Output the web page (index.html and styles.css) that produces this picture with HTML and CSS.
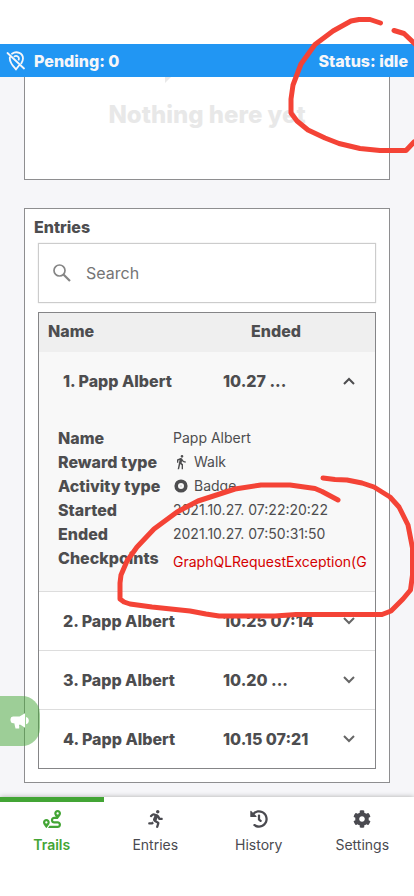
FILE: index.html
```html
<!DOCTYPE html>
<html lang="en">
<head>
<meta charset="utf-8">
<meta name="viewport" content="width=device-width, initial-scale=1">
<title>Trails</title>
<link rel="stylesheet" href="styles.css">
</head>
<body>
<div class="app">
  <header class="top">
    <div class="sync">
      <svg class="sync-icon" viewBox="0 0 20 20" width="20" height="20" fill="none" stroke="currentColor" stroke-width="1.8" stroke-linecap="round" aria-hidden="true">
        <path d="M1.5 2 18 17.5M6 2.7C10.700-.5 17 2.200 17 7.500c0 1.600-.7 3.200-1.600 4.700M3.800 6.500c-.5 5 3.500 8.700 6.200 11.800l3-3.800M8.500 5.400c2-1.500 5.200.5 4.200 3.200"/>
      </svg>
      <span>Pending: 0</span>
      <span class="sync-status">Status: idle</span>
    </div>
  </header>

  <main class="content">
    <section class="card empty">
      <svg class="empty-mark" viewBox="0 0 6 6" width="6" height="6" aria-hidden="true"><path d="M0 0h6L0 6z" fill="currentColor"/></svg>
      <p class="empty-text">Nothing here yet</p>
    </section>

    <section class="card entries">
      <h2 class="title">Entries</h2>
      <label class="search">
        <svg viewBox="0 0 18 18" width="18" height="18" fill="none" stroke="currentColor" stroke-width="1.700" aria-hidden="true"><circle cx="6.500" cy="6.500" r="5.500"/><path d="m10.500 10.500 6.500 6.500" stroke-width="2.200"/></svg>
        <input type="search" placeholder="Search" aria-label="Search">
      </label>

      <table class="table">
        <colgroup><col class="col-name"><col class="col-date"><col class="col-toggle"></colgroup>
        <thead>
          <tr><th scope="col">Name</th><th scope="col" class="head-date" colspan="2">Ended</th></tr>
        </thead>
        <tbody>
          <tr class="row open">
            <td class="name">1. Papp Albert</td><td>10.27 ...</td>
            <td><button class="toggle" aria-label="Collapse" aria-expanded="true"><svg viewBox="0 0 12 8" width="12" height="8" aria-hidden="true"><path d="m1 7 5-5 5 5"/></svg></button></td>
          </tr>
          <tr class="detail open">
            <td colspan="3">
              <dl class="facts">
                <dt>Name</dt><dd>Papp Albert</dd>
                <dt>Reward type</dt>
                <dd><svg class="fact-icon" viewBox="0 0 24 24" width="16" height="16" fill="currentColor" aria-hidden="true"><path d="M13.500 5.500c1.100 0 2-.9 2-2s-.9-2-2-2-2 .9-2 2 .9 2 2 2zM9.800 8.900 7 23h2.100l1.800-8 2.100 2v6h2v-7.500l-2.100-2 .6-3C14.800 12 16.800 13 19 13v-2c-1.900 0-3.500-1-4.300-2.400l-1-1.600c-.4-.6-1-1-1.700-1-.3 0-.5.1-.8.1L6 8.300V13h2V9.600l1.800-.7"/></svg>Walk</dd>
                <dt>Activity type</dt>
                <dd><svg class="fact-icon" viewBox="0 0 16 16" width="16" height="16" aria-hidden="true"><circle cx="8" cy="8" r="4.800" fill="none" stroke="currentColor" stroke-width="3.600"/><circle cx="8" cy="8" r=".7" fill="currentColor" opacity=".4"/></svg>Badge</dd>
                <dt>Started</dt><dd>2021.10.27. 07:22:20:22</dd>
                <dt>Ended</dt><dd>2021.10.27. 07:50:31:50</dd>
                <dt>Checkpoints</dt><dd class="error">GraphQLRequestException(G</dd>
              </dl>
            </td>
          </tr>
          <tr class="row">
            <td class="name">2. Papp Albert</td><td>10.25 07:14</td>
            <td><button class="toggle" aria-label="Expand" aria-expanded="false"><svg viewBox="0 0 12 8" width="12" height="8" aria-hidden="true"><path d="m1 1 5 5 5-5"/></svg></button></td>
          </tr>
          <tr class="row">
            <td class="name">3. Papp Albert</td><td>10.20 ...</td>
            <td><button class="toggle" aria-label="Expand" aria-expanded="false"><svg viewBox="0 0 12 8" width="12" height="8" aria-hidden="true"><path d="m1 1 5 5 5-5"/></svg></button></td>
          </tr>
          <tr class="row">
            <td class="name">4. Papp Albert</td><td>10.15 07:21</td>
            <td><button class="toggle" aria-label="Expand" aria-expanded="false"><svg viewBox="0 0 12 8" width="12" height="8" aria-hidden="true"><path d="m1 1 5 5 5-5"/></svg></button></td>
          </tr>
        </tbody>
      </table>
    </section>
  </main>

  <nav class="tabs">
    <a class="tab active" href="#trails">
      <svg viewBox="0 0 512 512" width="18" height="18" fill="currentColor" aria-hidden="true"><path d="M416 320h-96c-17.600 0-32-14.400-32-32s14.400-32 32-32h96s96-107 96-160-43-96-96-96-96 43-96 96c0 25.500 22.200 63.400 45.300 96H320c-52.900 0-96 43.100-96 96s43.100 96 96 96h96c17.600 0 32 14.400 32 32s-14.400 32-32 32H185.500c-16 24.800-33.800 47.700-47.300 64H416c52.900 0 96-43.100 96-96s-43.100-96-96-96zm0-256c17.700 0 32 14.300 32 32s-14.300 32-32 32-32-14.300-32-32 14.300-32 32-32zM96 256c-53 0-96 43-96 96s96 160 96 160 96-107 96-160-43-96-96-96zm0 128c-17.700 0-32-14.300-32-32s14.300-32 32-32 32 14.300 32 32-14.300 32-32 32z"/></svg>
      <span>Trails</span>
    </a>
    <a class="tab" href="#entries">
      <svg viewBox="0 0 416 512" width="15" height="18" fill="currentColor" aria-hidden="true"><path d="M272 96c26.510 0 48-21.490 48-48S298.510 0 272 0s-48 21.490-48 48 21.490 48 48 48zM113.690 317.470l-14.800 34.520H32c-17.670 0-32 14.330-32 32s14.330 32 32 32h77.450c19.250 0 36.580-11.440 44.110-29.090l8.790-20.520-10.670-6.300c-17.320-10.230-30.060-25.370-37.990-42.610zM384 223.990h-44.030l-26.060-53.250c-12.500-25.550-35.450-44.230-61.780-50.940l-71.080-21.140c-28.300-6.800-57.770-.55-80.840 17.140l-39.670 30.410c-14.030 10.750-16.690 30.830-5.920 44.860s30.840 16.660 44.860 5.920l39.690-30.410c7.670-5.890 17.440-8 25.270-6.140l14.700 4.370-37.460 87.390c-12.620 29.480-1.310 64.010 26.300 80.310l84.980 50.170-27.470 87.730c-5.280 16.860 4.110 34.810 20.970 40.090 3.190 1 6.410 1.480 9.580 1.480 13.610 0 26.230-8.770 30.520-22.450l31.640-101.060c5.910-20.770-2.890-43.080-21.640-54.390l-61.240-36.140 31.310-78.280 20.270 41.430c8 16.340 24.920 26.890 43.110 26.890H384c17.670 0 32-14.330 32-32s-14.330-31.990-32-31.990z"/></svg>
      <span>Entries</span>
    </a>
    <a class="tab" href="#history">
      <svg viewBox="0 0 512 512" width="18" height="18" fill="currentColor" aria-hidden="true"><path d="M504 255.531c.253 136.640-111.180 248.372-247.820 248.468-59.015.042-113.223-20.530-155.822-54.911-11.077-8.940-11.905-25.541-1.839-35.607l11.267-11.267c8.609-8.609 22.353-9.551 31.891-1.984C173.062 425.135 212.781 440 256 440c101.705 0 184-82.311 184-184 0-101.705-82.311-184-184-184-48.814 0-93.149 18.969-126.068 49.932l50.754 50.754c10.080 10.080 2.941 27.314-11.313 27.314H24c-8.837 0-16-7.163-16-16V38.627c0-14.254 17.234-21.393 27.314-11.314l49.372 49.372C129.209 34.136 189.552 8 256 8c136.810 0 247.747 110.780 248 247.531zm-180.912 78.784l9.823-12.630c8.138-10.463 6.253-25.542-4.210-33.679L288 256.349V152c0-13.255-10.745-24-24-24h-16c-13.255 0-24 10.745-24 24v135.651l65.409 50.874c10.463 8.137 25.541 6.253 33.679-4.210z"/></svg>
      <span>History</span>
    </a>
    <a class="tab" href="#settings">
      <svg viewBox="0 0 512 512" width="18" height="18" fill="currentColor" aria-hidden="true"><path d="M487.400 315.700l-42.600-24.600c4.300-23.200 4.300-47 0-70.200l42.600-24.600c4.900-2.800 7.100-8.600 5.500-14-11.100-35.600-30-67.800-54.700-94.600-3.800-4.100-10-5.100-14.800-2.300L380.800 110c-17.900-15.400-38.500-27.300-60.800-35.100V25.800c0-5.600-3.900-10.500-9.400-11.700-36.700-8.200-74.300-7.800-109.200 0-5.500 1.200-9.400 6.100-9.400 11.700V75c-22.200 7.900-42.800 19.800-60.800 35.100L88.700 85.500c-4.900-2.800-11-1.900-14.800 2.300-24.700 26.700-43.600 58.900-54.700 94.600-1.700 5.400.6 11.200 5.500 14L67.300 221c-4.300 23.200-4.300 47 0 70.200l-42.600 24.600c-4.900 2.800-7.100 8.600-5.500 14 11.100 35.600 30 67.800 54.700 94.600 3.800 4.100 10 5.100 14.800 2.300l42.600-24.600c17.900 15.400 38.500 27.300 60.800 35.100v49.200c0 5.600 3.900 10.500 9.400 11.700 36.700 8.200 74.300 7.800 109.200 0 5.500-1.200 9.400-6.100 9.400-11.700v-49.200c22.200-7.900 42.800-19.800 60.800-35.100l42.600 24.600c4.900 2.800 11 1.900 14.800-2.300 24.700-26.700 43.600-58.900 54.700-94.600 1.500-5.500-.7-11.300-5.600-14.100zM256 336c-44.100 0-80-35.900-80-80s35.900-80 80-80 80 35.900 80 80-35.900 80-80 80z"/></svg>
      <span>Settings</span>
    </a>
  </nav>

  <button class="feedback" aria-label="Announcements">
    <svg viewBox="0 0 20 16" width="20" height="16" fill="currentColor" aria-hidden="true"><path d="M3 3.500h6.500L15 .3v14.500l-4.500-3H9v1.200h.2V15.500H5.500l-1.200-5.300H3a2.800 2.800 0 0 1-2.500-2.800V6.100A2.600 2.600 0 0 1 3 3.500zM16 4c3.800.8 3.800 6.500 0 7.300z"/></svg>
  </button>

  <svg class="marks" viewBox="0 0 414 896" width="414" height="896" aria-hidden="true">
    <path d="M380.500 23 370 19.500H359L351 21 333 31 315 44.500 301 64 293 85 291 99V113L297 121 308 130 325 138 339 143.500 360 148.500 380 150.500H406L414 142"/>
    <path d="M394 30.500 404 33.500 416 45"/>
    <path d="M338 500 322 491.500 315 488.500 290 485H261L235 489 198 501 177 512 154 529 137 547 127 561 121 575 120 583V599L124 602 130 604 152 607 190 611 206 614 219 616H275L296 614.500H382L391 611 403 599 410.500 590 412.500 575V548L408 525 399 507 390 497 374 487 362 483 347 480 335 479.500 323 478"/>
  </svg>
</div>
</body>
</html>
```
FILE: styles.css
```css
* {
  box-sizing: border-box;
}

body {
  margin: 0;
  background: #f6f6f9;
  color: #4d4d4f;
  font-family: Inter, "Open Sans", sans-serif;
  font-size: 16px;
  line-height: 24px;
}

.app {
  position: relative;
  display: flex;
  flex-direction: column;
  min-height: 100vh;
  overflow: hidden;
}

.top {
  padding-top: 44px;
  background: #fff;
}

.sync {
  display: flex;
  align-items: center;
  gap: 8px;
  height: 33px;
  padding: 0 6px;
  background: #2196f3;
  color: #f6f6f9;
  font-weight: 800;
}

.sync-status {
  margin-left: auto;
}

.content {
  flex: 1;
  display: flex;
  flex-direction: column;
  gap: 28px;
  padding: 0 24px 14px;
}

.card {
  border: 1px solid #8e8e90;
  background: #fff;
}

.empty {
  display: flex;
  flex-direction: column;
  height: 103px;
  border-top: 0;
  color: #e8e8e8;
}

.empty-mark {
  margin-left: 140px;
}

.empty-text {
  margin: 16px 0 0;
  font-size: 24px;
  font-weight: 800;
  line-height: 32px;
  text-align: center;
}

.entries {
  padding: 6px 13px 13px;
}

.title {
  margin: 0 -4px 4px;
  font-size: 16px;
  font-weight: 800;
  line-height: 24px;
}

.search {
  display: flex;
  align-items: center;
  gap: 15px;
  height: 60px;
  margin-bottom: 9px;
  padding: 0 14px;
  border: 1px solid #ccc;
  box-shadow: 0 0 1px #ccc;
  color: #858585;
}

.search input {
  flex: 1;
  min-width: 0;
  padding: 0;
  border: 0;
  outline: 0;
  background: none;
  color: #4d4d4f;
  font: inherit;
}

.search input::placeholder {
  color: #757575;
  opacity: 1;
}

.table {
  width: 100%;
  border: 1px solid #858587;
  border-spacing: 0;
  table-layout: fixed;
  font-weight: 800;
}

.col-toggle {
  width: 55px;
}

.col-date {
  width: 97px;
}

.table th,
.table td {
  padding: 0;
  text-align: left;
  white-space: nowrap;
}

.table th {
  height: 39px;
  padding: 0 0 3px 9px;
  background: #efefef;
  font-weight: 800;
}

.table .head-date {
  padding-left: 28px;
}

.row td {
  height: 59px;
  border-bottom: 1px solid #ddd;
}

.row:last-child td {
  height: 58px;
  border-bottom: 0;
}

.row .name {
  padding-left: 24px;
}

.open td {
  background: #f8f8f8;
}

.row.open td {
  height: 58px;
  border-bottom: 0;
}

.toggle {
  display: flex;
  align-items: center;
  justify-content: center;
  width: 57px;
  height: 40px;
  padding: 0;
  border: 0;
  background: none;
  color: #666;
}

.open .toggle {
  color: #4d4d4f;
}

.toggle path {
  fill: none;
  stroke: currentColor;
  stroke-width: 2;
}

.detail td {
  border-bottom: 1px solid #ddd;
}

.facts {
  display: grid;
  grid-template-columns: 115px 1fr;
  grid-auto-rows: 24px;
  margin: 0;
  padding: 16px 0 21px 19px;
  overflow: hidden;
}

.facts dd {
  display: flex;
  align-items: center;
  gap: 5px;
  min-width: 0;
  margin: 0;
  overflow: hidden;
  font-size: 14px;
  font-weight: 400;
}

.facts .error {
  height: 28px;
  padding-top: 4px;
  color: #d50000;
}

.tabs {
  display: grid;
  grid-template-columns: repeat(4, 1fr);
  padding-bottom: 34px;
  background: #fff;
  box-shadow: 0 0 5px #aaa;
}

.tab {
  display: flex;
  flex-direction: column;
  align-items: center;
  gap: 5px;
  height: 65px;
  padding-top: 8px;
  border-top: 5px solid transparent;
  color: #4a4a50;
  font-size: 14px;
  text-decoration: none;
}

.tab.active {
  border-color: #43a535;
  color: #43a535;
  font-weight: 600;
}

.feedback {
  position: absolute;
  bottom: 150px;
  left: 0;
  display: flex;
  align-items: center;
  width: 40px;
  height: 50px;
  padding: 0 0 0 10px;
  border: 0;
  border-radius: 0 18px 18px 0;
  background: rgba(67, 165, 53, 0.5);
  color: #fff;
}

.marks {
  position: absolute;
  top: 0;
  left: 0;
  fill: none;
  stroke: #f44336;
  stroke-width: 5;
  stroke-linecap: round;
  stroke-linejoin: round;
  pointer-events: none;
}
```
